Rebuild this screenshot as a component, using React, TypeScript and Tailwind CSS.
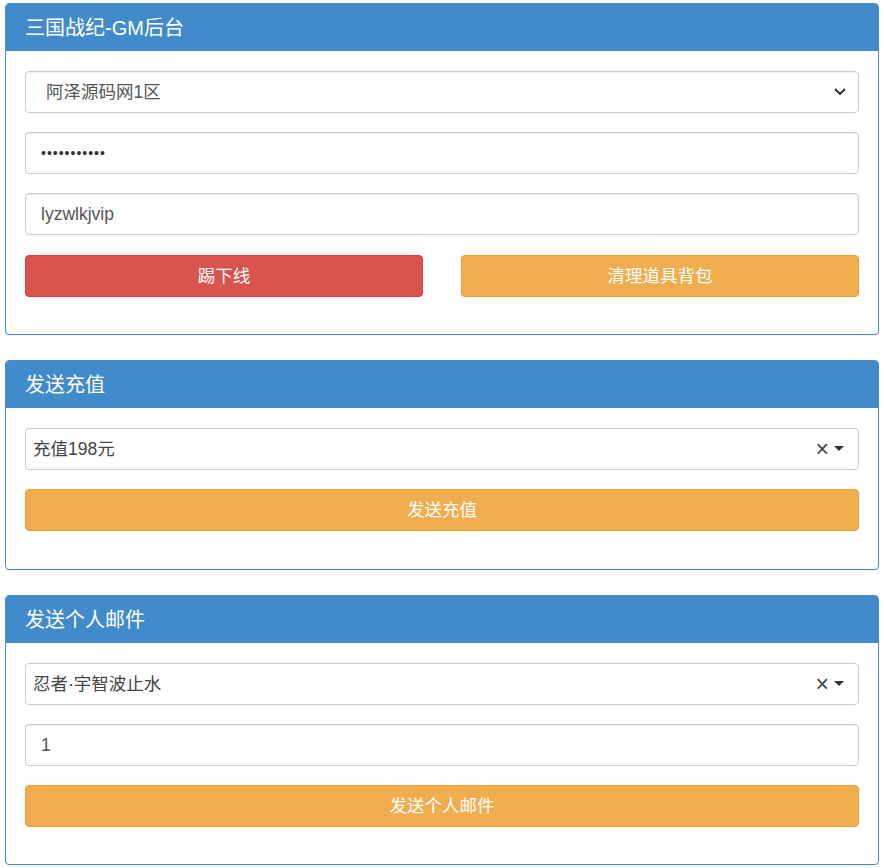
import React from "react";

const font = { fontFamily: '"Liberation Sans", "Noto Sans CJK SC", sans-serif' };

function Panel({ title, children, tall }: { title: string; children: React.ReactNode; tall?: boolean }) {
  return (
    <div className="rounded-[4px] border border-[#428bca] bg-white shadow-[0_1px_1px_rgba(0,0,0,0.05)] overflow-hidden">
      <div className="h-[47px] bg-[#428bca] pl-[19px] flex items-center text-white text-[20px]">{title}</div>
      <div className={"px-[19px] pt-[20px] flex flex-col gap-[19px] " + (tall ? "pb-[38px]" : "pb-[37px]")}>{children}</div>
    </div>
  );
}

function Select2({ text }: { text: string }) {
  return (
    <div className="h-[42px] rounded-[4px] border border-[#ccc] flex items-center pl-[7px] pr-[14px] text-[17.5px] text-[#444]">
      <span className="flex-1">{text}</span>
      <span className="text-[#444] text-[23px] leading-none mr-[5px] mt-[1px]">×</span>
      <svg width="10" height="6" viewBox="0 0 10 6"><path d="M0 0 L10 0 L5 5 Z" fill="#333" /></svg>
    </div>
  );
}

function TextBox({ children }: { children: React.ReactNode }) {
  return (
    <div className="h-[42px] rounded-[4px] border border-[#ccc] flex items-center pl-[15px] text-[17.5px] text-[#555] shadow-[inset_0_1px_1px_rgba(0,0,0,0.075)]">
      {children}
    </div>
  );
}

function Btn({ color, children }: { color: "red" | "orange"; children: React.ReactNode }) {
  return (
    <div
      className={
        "h-[42px] rounded-[4px] flex items-center justify-center text-white text-[17.5px] border " +
        (color === "red" ? "bg-[#d9534f] border-[#d43f3a]" : "bg-[#f0ad4e] border-[#eea236]")
      }
    >
      {children}
    </div>
  );
}

export default function App() {
  return (
    <div className="bg-white px-[5px] pt-[3px] pb-[3px] flex flex-col gap-[25px]" style={font}>
      <Panel title="三国战纪-GM后台">
        <div className="h-[42px] rounded-[4px] border border-[#ccc] flex items-center pl-[20px] pr-[12px] text-[17.5px] text-[#555] shadow-[inset_0_1px_1px_rgba(0,0,0,0.075)]">
          <span className="flex-1">阿泽源码网1区</span>
          <svg width="12" height="8" viewBox="0 0 12 8">
            <path d="M1.5 1.5 L6 6 L10.5 1.5" fill="none" stroke="#333" strokeWidth="2" strokeLinecap="round" strokeLinejoin="round" />
          </svg>
        </div>
        <TextBox>
          <span className="tracking-[1px] text-[#333] text-[14px]">•••••••••••</span>
        </TextBox>
        <TextBox>lyzwlkjvip</TextBox>
        <div className="grid grid-cols-2 gap-[38px] mt-[1px]">
          <Btn color="red">踢下线</Btn>
          <Btn color="orange">清理道具背包</Btn>
        </div>
      </Panel>
      <Panel title="发送充值" tall>
        <Select2 text="充值198元" />
        <Btn color="orange">发送充值</Btn>
      </Panel>
      <Panel title="发送个人邮件">
        <Select2 text="忍者·宇智波止水" />
        <TextBox>1</TextBox>
        <Btn color="orange">发送个人邮件</Btn>
      </Panel>
    </div>
  );
}
